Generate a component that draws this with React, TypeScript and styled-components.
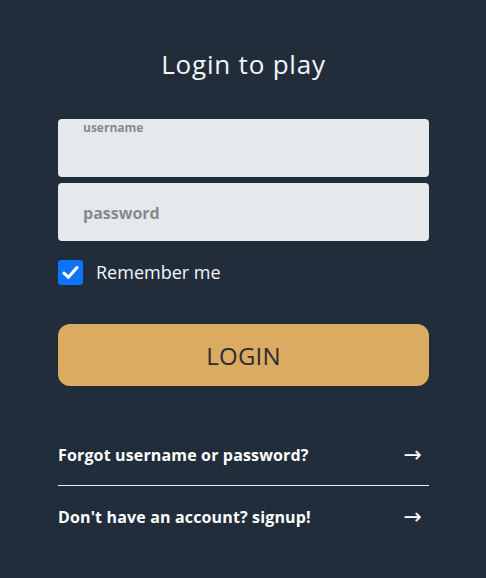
import React from "react";
import styled, { createGlobalStyle } from "styled-components";

const Global = createGlobalStyle`
  html, body { margin: 0; padding: 0; background: #212d3b; }
  body { font-family: "Open Sans", "Noto Sans", sans-serif; }
  * { box-sizing: border-box; }
`;

const Page = styled.div`
  width: 486px;
  min-height: 578px;
  background: #212d3b;
  padding: 48px 57px 0 58px;
  display: flex;
  flex-direction: column;
`;

const Title = styled.h1`
  margin: 0;
  font-size: 26px;
  font-weight: 400;
  letter-spacing: 0.8px;
  color: #f4f6f8;
  text-align: center;
  line-height: 32px;
`;

const Form = styled.form`
  margin-top: 39px;
  display: flex;
  flex-direction: column;
`;

const Fields = styled.div`
  display: flex;
  flex-direction: column;
  gap: 6px;
`;

const Field = styled.label`
  position: relative;
  display: block;
  height: 58px;
  background: #e5e9ec;
  border-radius: 4px;
`;

const FloatLabel = styled.span<{ $floating?: boolean }>`
  position: absolute;
  left: 25px;
  color: #858a8f;
  font-weight: 700;
  ${(p) =>
    p.$floating
      ? `top: 1px; font-size: 12px; line-height: 16px;`
      : `top: 20px; font-size: 16px; line-height: 20px;`}
`;

const Input = styled.input`
  width: 100%;
  height: 100%;
  border: none;
  background: transparent;
  outline: none;
  padding: 18px 25px 0;
  font: inherit;
  font-size: 16px;
`;

const CheckRow = styled.label`
  margin-top: 18px;
  display: flex;
  align-items: center;
  gap: 13px;
  color: #f4f6f8;
  font-size: 18px;
  height: 26px;
`;

const Box = styled.span`
  width: 25px;
  height: 25px;
  border-radius: 3px;
  background: #0b74f7;
  display: flex;
  align-items: center;
  justify-content: center;
`;

const LoginButton = styled.button`
  margin-top: 39px;
  height: 62px;
  border: none;
  border-radius: 12px;
  background: #dcab62;
  color: #2a2d31;
  font-family: inherit;
  font-size: 24px;
  font-weight: 400;
  letter-spacing: 0.2px;
  cursor: pointer;
`;

const Links = styled.div`
  margin-top: 38px;
  display: flex;
  flex-direction: column;
`;

const LinkRow = styled.a<{ $divider?: boolean }>`
  display: flex;
  align-items: center;
  justify-content: space-between;
  height: 62px;
  color: #ffffff;
  font-size: 16px;
  font-weight: 700;
  letter-spacing: 0.15px;
  text-decoration: none;
  padding-right: 7px;
  border-bottom: ${(p) => (p.$divider ? "1px solid #e8edf2" : "none")};
`;

const Arrow = styled.span`
  font-family: "DejaVu Sans", sans-serif;
  font-size: 22px;
  font-weight: 400;
  line-height: 1;
`;

export default function App() {
  return (
    <>
      <Global />
      <Page>
        <Title>Login to play</Title>
        <Form onSubmit={(e) => e.preventDefault()}>
          <Fields>
            <Field>
              <FloatLabel $floating>username</FloatLabel>
              <Input type="text" />
            </Field>
            <Field>
              <FloatLabel>password</FloatLabel>
              <Input type="password" />
            </Field>
          </Fields>
          <CheckRow>
            <Box>
              <svg width="19" height="19" viewBox="0 0 16 16">
                <path d="M2.5 8.5 L6.2 12 L13.5 3.8" fill="none" stroke="#fff" strokeWidth="2.6" strokeLinecap="round" strokeLinejoin="round" />
              </svg>
            </Box>
            Remember me
          </CheckRow>
          <LoginButton type="submit">LOGIN</LoginButton>
        </Form>
        <Links>
          <LinkRow href="#" $divider>
            Forgot username or password?
            <Arrow>→</Arrow>
          </LinkRow>
          <LinkRow href="#">
            Don't have an account? signup!
            <Arrow>→</Arrow>
          </LinkRow>
        </Links>
      </Page>
    </>
  );
}
